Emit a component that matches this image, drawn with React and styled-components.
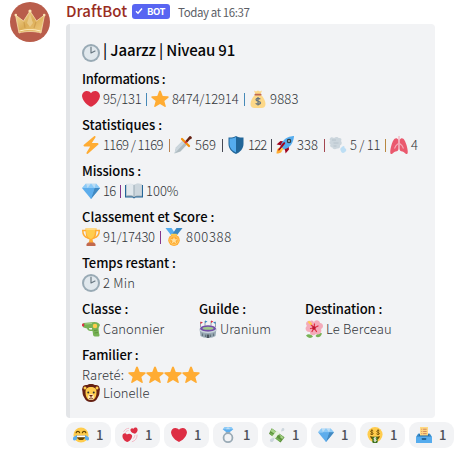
import React from 'react';
import styled, { createGlobalStyle } from 'styled-components';

const GlobalStyle = createGlobalStyle`
  body { margin: 0; background: #fff; overflow: hidden; }
  * { box-sizing: border-box; }
`;

const SANS = '"Noto Sans CJK JP", "Noto Sans", sans-serif';

const Message = styled.article`
  display: flex;
  width: 470px;
  height: 456px;
  padding: 2px 0 0 10px;
  font-family: ${SANS};
`;
const Avatar = styled.div`
  flex: none;
  width: 40px;
  height: 40px;
  margin-right: 16px;
`;
const Content = styled.div`
  flex: 1;
  min-width: 0;
`;
const Header = styled.header`
  display: flex;
  align-items: center;
  height: 18px;
  margin-bottom: 4px;
`;
const Author = styled.span`
  width: 66px;
  color: #992d22;
  font-size: 15px;
  font-weight: 500;
  line-height: 18px;
  letter-spacing: 0.05px;
  white-space: nowrap;
`;
const BotTag = styled.span`
  display: flex;
  align-items: center;
  width: 38px;
  height: 15px;
  padding-left: 3px;
  gap: 4px;
  border-radius: 3px;
  background: #5865f2;
  color: #fff;
  font-size: 9.5px;
  font-weight: 700;
  line-height: 15px;
  letter-spacing: -0.5px;
`;
const Timestamp = styled.time`
  margin-left: 8px;
  padding-top: 2px;
  color: #5c5e66;
  font-size: 11.5px;
  line-height: 18px;
  letter-spacing: -0.4px;
  white-space: nowrap;
`;
const Embed = styled.section`
  width: 369px;
  height: 394px;
  padding: 16px 0 0 12px;
  border-left: 4px solid #e3e5e8;
  border-radius: 4px;
  background: #f2f3f5;
`;
const Title = styled.h1`
  display: flex;
  align-items: flex-end;
  gap: 3px;
  height: 22px;
  margin: 0 0 8px;
  color: #060607;
  font-size: 15px;
  font-weight: 500;
  line-height: 24px;
  letter-spacing: -0.14px;
  white-space: nowrap;
`;
const Field = styled.section`
  width: ${(p) => (p.$width ? `${p.$width}px` : 'auto')};
  margin-bottom: 8px;
`;
const FieldRow = styled.div`
  display: flex;
`;
const FieldName = styled.h2`
  height: 18px;
  margin: 0 0 2px;
  color: #060607;
  font-size: 13px;
  font-weight: 500;
  line-height: 18px;
  letter-spacing: ${(p) => p.$spacing || 0}px;
  white-space: nowrap;
`;
const Line = styled.div`
  display: flex;
  align-items: center;
  height: 18px;
`;
const Value = styled.span`
  flex: none;
  width: ${(p) => (p.$width ? `${p.$width}px` : 'auto')};
  padding-left: ${(p) => (p.$flush ? 0 : 3)}px;
  color: #313338;
  font-size: 13px;
  font-weight: 300;
  line-height: 18px;
  letter-spacing: ${(p) => p.$spacing || 0}px;
  white-space: nowrap;
`;
const Bar = styled.span`
  flex: none;
  width: 1px;
  height: 13px;
  margin: 1px 4px 0 0;
  background: ${(p) => p.$color || '#5b5d68'};
`;
const Reactions = styled.footer`
  display: flex;
  gap: 4px;
  margin-top: 4px;
`;
const Reaction = styled.button`
  display: flex;
  align-items: center;
  width: 45px;
  height: 26px;
  padding: 0 0 0 7px;
  border: 0;
  border-radius: 9px;
  background: #f2f3f5;
  color: #4e5058;
  font: 500 13px/16px ${SANS};
  span { margin-left: 7px; }
`;
const Glyph = styled.svg`
  flex: none;
  display: block;
  width: ${(p) => p.$size}px;
  height: ${(p) => p.$size}px;
`;

const art = {
  clock: (
    <>
      <circle cx="18" cy="18" r="18" fill="#99aab5" />
      <circle cx="18" cy="18" r="14" fill="#e1e8ed" />
      <path d="M18 6v12l8-4" fill="none" stroke="#66757f" strokeWidth="2.3" strokeLinecap="round" strokeLinejoin="round" />
    </>
  ),
  heart: (
    <path fill="#dd2e44" d="M35.9 11.8C35.9 6.4 31.6 2 26.2 2 22.800 2 19.800 3.700 18 6.300 16.200 3.700 13.200 2 9.800 2 4.400 2 .1 6.400.1 11.800c0 .8.1 1.500.3 2.200C1.700 22.200 10.800 30.900 18 33.500c7.200-2.600 16.300-11.300 17.600-19.500.2-.7.3-1.400.3-2.200z" />
  ),
  star: (
    <path fill="#ffac33" d="M18 1c.9 0 1.500.6 1.900 1.500l3.600 9.500 10.300.5c1.700.1 2.200 1.700.9 2.800l-8 6.500 2.800 10c.5 1.700-.9 2.700-2.300 1.800L18 28l-9.200 5.600c-1.400.9-2.800-.1-2.300-1.800l2.800-10-8-6.500c-1.300-1.100-.8-2.700.9-2.800l10.300-.5 3.600-9.500C16.500 1.600 17.100 1 18 1z" />
  ),
  bag: (
    <>
      <path fill="#fdd888" d="M12 10h12c5 4 9 12 9 18 0 5-3 8-8 8H11c-5 0-8-3-8-8 0-6 4-14 9-18z" />
      <path fill="#fdd888" d="M10 1l4 2 4-2 4 2 4-2-3 8H13z" />
      <rect x="11" y="7.500" width="14" height="3.500" rx="1.700" fill="#bf6952" />
      <path fill="none" stroke="#67757f" strokeWidth="2.500" d="M22.500 18.500c-1-2-8.500-2.500-8.500 1.200 0 4 9 2 9 6 0 4-8.500 3.500-9.500.8M18 14v17" />
    </>
  ),
  bolt: <path fill="#ffac33" d="M32.900 15.300c-.3-.8-1-1.300-1.900-1.300H19.600L26.800 2.900c.4-.7.3-1.600-.2-2.200C26-.1 25-.2 24.200.3L3.800 17.400c-.7.600-1 1.500-.7 2.300.3.800 1.100 1.300 1.900 1.300h11.400L9.200 33.100c-.4.700-.3 1.600.2 2.200.7.800 1.700.9 2.400.4l20.400-18.100c.7-.6 1-1.500.7-2.300z" />,
  dagger: (
    <>
      <path fill="#aebbc1" d="M1 35l3-12L19 8l8 8-14 15z" />
      <path fill="#ccd6dd" d="M1 35l3-12L19 8l4 4z" />
      <path stroke="#662113" strokeWidth="5" strokeLinecap="round" d="M25 11l7-8" />
      <path stroke="#f4900c" strokeWidth="4.500" strokeLinecap="round" d="M16 6l14 14" />
      <circle cx="32.500" cy="3.500" r="3" fill="#662113" />
      <circle cx="23.500" cy="12.500" r="2.200" fill="#dd2e44" />
    </>
  ),
  shield: (
    <>
      <path fill="#269" d="M18 0c5 3 10 3.500 15 3v13c0 9-7 17-15 20C10 33 3 25 3 16V3c5 .5 10 0 15-3z" />
      <path fill="#55acee" d="M18 2v31C11 30 5 24 5 16V5c5 0 9-.5 13-3z" />
    </>
  ),
  rocket: (
    <>
      <path fill="#a0041e" d="M1 17l8-7 9 1 7 7 1 9-7 8s0-5-2-9L10 19c-4-2-9-2-9-2z" />
      <path fill="#ffac33" d="M1 35s0-5 2-9c2-3 7-3 8-1 1 3 1 6-1 8-3 2-9 2-9 2z" />
      <path fill="#55acee" d="M36 0S25 0 17 7c-6 5-7 10-8 15l5 5c5-1 10-2 15-8C36 11 36 0 36 0z" />
      <path fill="#a0041e" d="M8 28c-2 1-4 1-4 0l9-13c2-2 4-3 5-2s0 3-2 5z" />
      <circle cx="26" cy="10" r="4.500" fill="#292f33" />
      <circle cx="26" cy="10" r="2.600" fill="#8899a6" />
      <path fill="#ffcc4d" d="M8 28l4-5 3 3-4 5z" />
    </>
  ),
  wind: (
    <>
      <path fill="#ccd6dd" d="M2 5C4 1 8 3 10 4c4-3 8-2 9 0 6-1 7 3 5 6 3 4 1 8-2 9 1 4-2 7-6 6-4 3-9 1-9-2-4 0-6-3-4-6-3-2-3-6 0-7-2-2-2-4-1-5z" />
      <path fill="none" stroke="#aebbc4" strokeWidth="1.300" d="M6 8h8M9 14h10M9 20h6" />
      <path fill="#bddef4" d="M26 22c3-4 6-1 5 2 4 1 5 6 1 8-4 4-8 1-8-2-3-3-1-6 2-8z" />
    </>
  ),
  lungs: (
    <>
      <path fill="#ea596e" d="M14 5c-5-2-8 4-11 13C1 25-1 34 2 36c3 1 5-4 9-5 4 0 6-2 6-6V10c0-3-1-4-3-5zM22 5c5-2 8 4 11 13 2 7 4 16 1 18-3 1-5-4-9-5-4 0-6-2-6-6V10c0-3 1-4 3-5z" />
      <path fill="none" stroke="#f4abba" strokeWidth="2.300" d="M18 0v14l-6 5-3 6M18 14l6 5 3 6" />
    </>
  ),
  gem: (
    <>
      <path fill="#bdddf4" d="M8 3h20l8 9H0z" />
      <path fill="#5dadec" d="M0 12h36L18 34z" />
      <path fill="#8ccaf7" d="M8 3l3 9H0zM28 3l-3 9h11zM11 12l7-9 7 9z" />
      <path fill="#4289c1" d="M25 12h11L18 34z" />
      <path fill="#5dadec" d="M11 12h14l-7 22z" />
    </>
  ),
  book: (
    <>
      <path fill="#226699" d="M0 6h36v25H21l-3 2-3-2H0z" />
      <path fill="#99aab5" d="M2 5h14l2 2 2-2h14v24H21l-3 2-3-2H2z" />
      <path fill="#e1e8ed" d="M3 4c6-2 12-1 15 2 3-3 9-4 15-2v23c-6-1-12-1-15 2-3-3-9-3-15-2z" />
      <path fill="#ccd6dd" d="M18 6c3-3 9-4 15-2v23c-6-1-12-1-15 2z" />
      <path stroke="#99aab5" strokeWidth="2" d="M18 6v23" />
    </>
  ),
  trophy: (
    <>
      <path fill="none" stroke="#ffac33" strokeWidth="3" d="M9 5H1.500c0 8 3 13 11 15M27 5h7.500c0 8-3 13-11 15" />
      <path fill="#ffac33" d="M7 1h22c0 12-1 20-8 22l2 8H13l2-8C8 21 7 13 7 1z" />
      <path fill="#ffcc4d" d="M8 2h18c0 10-1 17-8 20-7-2-10-9-10-20z" />
      <path fill="#c1694f" d="M12 29h12l3 3v4H9v-4z" />
      <ellipse cx="18" cy="2" rx="12" ry="2" fill="#ffd983" />
    </>
  ),
  medal: (
    <>
      <path fill="#55acee" d="M1 0h12l8 12-7 5z" />
      <path fill="#3b88c3" d="M35 0H23L12 16l9 2z" />
      <circle cx="18" cy="24.500" r="11.500" fill="#ffac33" />
      <circle cx="18" cy="24.500" r="8.500" fill="none" stroke="#ffd983" strokeWidth="1.300" />
      <path fill="#ffe0a0" d="M18 18l2 4.500h5L21 26l1.500 5-4.500-3-4.500 3L15 26l-4-3.500h5z" />
      <rect x="12" y="11.500" width="12" height="3.500" rx="1.700" fill="#ffcc4d" />
    </>
  ),
  gun: (
    <>
      <path fill="#77b255" d="M3 6l22-2c6 0 10 3 11 6l-2 4c-2 3 0 8 0 12l1 4c0 2-1 3-3 3h-6c-3 0-4-2-4-5l-1-6h-4c-4 0-6-2-7-5L3 15c-2-2-2-7 0-9z" />
      <rect x="0" y="7" width="4.500" height="6" rx="2" fill="#dd2e44" />
      <path stroke="#a6d388" strokeWidth="2.500" d="M6 8l14-1" />
      <path fill="#f2f3f5" d="M14 16h6v3h-3c-2 0-3-1-3-3z" />
      <circle cx="26" cy="12" r="4.500" fill="#ffcc4d" />
      <path stroke="#5c913b" strokeWidth="1.800" d="M24 21l7-1M25 26l7-1" />
    </>
  ),
  stadium: (
    <>
      <path stroke="#66757f" strokeWidth="1.300" d="M3 14V4M12 11V2M24 11V2M33 14V4" />
      <path fill="#dd2e44" d="M3 3l5 2-5 3zM24 1l5 2-5 3z" />
      <path fill="#3b88c3" d="M12 1l5 2-5 3zM33 3v5l-5-3z" />
      <path fill="#99aab5" d="M1 17c5 5 29 5 34 0l-2 15c-6 5-24 5-30 0z" />
      <ellipse cx="18" cy="17" rx="16" ry="6.500" fill="#744eaa" />
      <ellipse cx="18" cy="16.500" rx="11" ry="3.200" fill="#9fc98a" />
      <path fill="none" stroke="#ccd6dd" strokeWidth="2.500" d="M2 20c6 6 26 6 32 0" />
      <path stroke="#66757f" strokeWidth="2.500" d="M7 27v5M13 29v5M23 29v5M29 27v5" />
      <path fill="#4b565e" d="M15.500 29h5v7h-5z" />
    </>
  ),
  flower: (
    <>
      <path fill="#77b255" d="M2 31c4-4 10-3 14 2-3 4-10 4-14-2zM34 27c-5-2-10 0-13 5 4 5 10 3 13-5z" />
      <path fill="#f4abba" d="M18 5C19-1 29-1 30 6c7 0 8 9 2 12 3 7-4 13-10 10-5 5-13 2-12-4-8 1-12-8-6-12C-1 6 5-1 11 2c3-2 6 0 7 3z" />
      <path fill="none" stroke="#dd2e44" strokeWidth="2.500" strokeLinecap="round" d="M18 16L12 9M18 16l8-4M18 16l5 7M18 16l-4 7M18 16l-7 1M18 16l1-8" />
      <circle cx="18" cy="16" r="3.500" fill="#be1931" />
      <path stroke="#ffcc4d" strokeWidth="4" strokeLinecap="round" d="M8 4l4 4" />
    </>
  ),
  lion: (
    <>
      <path fill="#662113" d="M18 0c4 0 6 1 8 2 4-1 9 1 9 6 2 3 0 5 0 8 0 6-2 9-4 12-2 5-7 8-13 8S7 33 5 28c-2-3-4-6-4-12 0-3-2-5 0-8 0-5 5-7 9-6 2-1 4-2 8-2z" />
      <circle cx="6" cy="8" r="3" fill="#ffcc4d" />
      <circle cx="30" cy="8" r="3" fill="#ffcc4d" />
      <path fill="#ffcc4d" d="M18 6c7 0 11 3 11 10 0 9-3 16-11 16S7 25 7 16C7 9 11 6 18 6z" />
      <ellipse cx="18" cy="26" rx="6" ry="6" fill="#ffe8b6" />
      <circle cx="12.500" cy="17" r="2" fill="#292f33" />
      <circle cx="23.500" cy="17" r="2" fill="#292f33" />
      <path fill="#662113" d="M14 22h8l-4 4z" />
      <path fill="none" stroke="#662113" strokeWidth="1.500" d="M18 25v3M14 29c2 1 6 1 8 0" />
    </>
  ),
  joy: (
    <>
      <circle cx="18" cy="18" r="17" fill="#ffcc4d" />
      <path fill="none" stroke="#664500" strokeWidth="2.600" strokeLinecap="round" d="M7 13c1-4 7-4 8 0M21 13c1-4 7-4 8 0" />
      <path fill="#664500" d="M8 19h20c0 14-20 14-20 0z" />
      <path fill="#fff" d="M9 19h18v4H9z" />
      <path fill="#5dadec" d="M8 18c2 5 2 11-3 12s-7-4-4-7zM28 18c-2 5-2 11 3 12s7-4 4-7z" />
    </>
  ),
  hearts: (
    <>
      <path fill="#dd2e44" d="M12 34C7 32 1 27 1 20c0-6 7-8 10-3 4-4 12-2 12 4-1 7-6 11-11 13zM29 15c-4 0-9-3-10-7-1-5 4-7 7-4 2-4 8-4 9 1 1 4-2 8-6 10z" />
      <path fill="none" stroke="#f4abba" strokeWidth="1.800" strokeLinecap="round" d="M4 10c3-5 7-7 11-7M34 18c0 8-4 13-11 15M29 19c-1 4-2 6-4 7M8 12c2-3 4-4 6-4" />
    </>
  ),
  ring: (
    <>
      <circle cx="18" cy="24" r="10" fill="none" stroke="#99aab5" strokeWidth="4" />
      <path fill="#8ccaf7" d="M10 0h16l4 5-12 9L6 5z" />
      <path fill="#5dadec" d="M6 5h24l-12 9z" />
      <path fill="#bdddf4" d="M13 5l5-5 5 5z" />
      <path stroke="#99aab5" strokeWidth="3" d="M13 13h10" />
    </>
  ),
  money: (
    <>
      <path fill="#5c913b" d="M6 3l29 20-9 12L0 15z" />
      <path fill="#a6d388" d="M7 4l26 19-3 4L3 9z" />
      <path fill="#77b255" d="M4 13l23 17-3 3L2 15z" />
      <path fill="#e8f0e0" d="M18 8l7 5-13 15-7-5z" />
      <circle cx="22" cy="22" r="4" fill="#5c913b" />
      <path fill="#ccd6dd" d="M31 2c4 0 5 5 1 7l-5 1c1-3 1-7 4-8zM5 26l7-2c0 6-3 10-7 10-4-1-4-6 0-8z" />
    </>
  ),
  rich: (
    <>
      <circle cx="18" cy="17" r="17" fill="#ffcc4d" />
      <path fill="none" stroke="#664500" strokeWidth="1.700" d="M14 9c-2-2-7-1-6 1 1 3 6 2 6 5 0 2-5 3-7 0M11 5v13M28 9c-2-2-7-1-6 1 1 3 6 2 6 5 0 2-5 3-7 0M25 5v13" />
      <path fill="#664500" d="M7 20c7 3 15 3 22 0-1 6-5 9-11 9S8 26 7 20z" />
      <path fill="#3e721d" d="M12 22h12v11c0 2-1 3-3 3h-6c-2 0-3-1-3-3z" />
      <path fill="none" stroke="#fff" strokeWidth="2" d="M21 25c-2-2-6 0-5 2 2 2 5 1 5 3s-4 2-6 0M18 23v11" />
    </>
  ),
  ballot: (
    <>
      <path fill="#55acee" d="M5 15h26l5 7v14H0V22z" />
      <path fill="#3b88c3" d="M5 15h26l4 7H1z" />
      <path fill="#226699" d="M7 17h22v3H7z" />
      <path fill="#ffd983" d="M9 0h18v19H9z" />
      <path stroke="#c1694f" strokeWidth="1.700" d="M12 5h2M16 5h8M12 10h2M16 10h8M12 15h2M16 15h8" />
      <rect x="13" y="25" width="10" height="4" rx="1" fill="#269" />
    </>
  ),
};

function Emoji({ name, size = 18 }) {
  return (
    <Glyph $size={size} viewBox="0 0 36 36" aria-label={name}>
      {art[name]}
    </Glyph>
  );
}

function Crown() {
  return (
    <svg width="40" height="40" viewBox="0 0 40 40">
      <defs>
        <linearGradient id="gold" x1="0" y1="0" x2="1" y2="1">
          <stop offset="0" stopColor="#f6dda0" />
          <stop offset=".5" stopColor="#dcae58" />
          <stop offset="1" stopColor="#f0cb80" />
        </linearGradient>
      </defs>
      <circle cx="20" cy="20" r="20" fill="#b95d4b" />
      <path
        d="M9 31L5.500 13l8 6L20 9l6.500 10 8-6L31 31c-6-2-16-2-22 0z"
        fill="url(#gold)"
        stroke="#f5dcab"
        strokeWidth=".8"
        strokeLinejoin="round"
      />
      <path d="M14 20l1 6M26 20l-2 6" stroke="#c08c3f" strokeWidth="1.200" opacity=".5" />
      <path d="M20 12l3 9-3 4-3-4z" fill="#e9c987" />
      <path d="M9.500 29c6-2 15-2 21 0" fill="none" stroke="#fff0c5" strokeWidth="1.200" />
      <circle cx="20" cy="9" r="1.600" fill="#fae4b4" />
      <circle cx="5.800" cy="13" r="1.300" fill="#fae4b4" />
      <circle cx="34.200" cy="13" r="1.300" fill="#fae4b4" />
    </svg>
  );
}

function Stats({ items }) {
  return (
    <Line>
      {items.map(([icon, text, width, bar, spacing]) => (
        <React.Fragment key={icon}>
          <Emoji name={icon} />
          <Value $width={width} $spacing={spacing}>{text}</Value>
          {bar && <Bar $color={bar} />}
        </React.Fragment>
      ))}
    </Line>
  );
}

const reactions = ['joy', 'hearts', 'heart', 'ring', 'money', 'gem', 'rich', 'ballot'];

export default function App() {
  return (
    <>
      <GlobalStyle />
      <Message>
        <Avatar><Crown /></Avatar>
        <Content>
          <Header>
            <Author>DraftBot</Author>
            <BotTag>
              <svg width="8" height="8" viewBox="0 0 8 8"><path d="M1 4.300l2 2L7 1.500" fill="none" stroke="#fff" strokeWidth="1.400" /></svg>
              BOT
            </BotTag>
            <Timestamp>Today at 16:37</Timestamp>
          </Header>
          <Embed>
            <Title><Emoji name="clock" /><span>| Jaarzz | Niveau 91</span></Title>
            <Field>
              <FieldName $spacing={-0.28}>Informations :</FieldName>
              <Stats items={[['heart', '95/131', 46, '#4689b8', -0.25], ['star', '8474/12914', 75, '#4689b8', -0.12], ['bag', '9883', 0, null, 0.2]]} />
            </Field>
            <Field>
              <FieldName>Statistiques :</FieldName>
              <Stats
                items={[
                  ['bolt', '1169 / 1169', 69, '#b88352', -0.6],
                  ['dagger', '569', 30, '#464954'],
                  ['shield', '122', 26, '#464954', -0.8],
                  ['rocket', '338', 30, '#a34650'],
                  ['wind', '5 / 11', 38, '#b88740', -0.25],
                  ['lungs', '4'],
                ]}
              />
            </Field>
            <Field>
              <FieldName $spacing={-0.1}>Missions :</FieldName>
              <Stats items={[['gem', '16', 20, '#84368c', -0.8], ['book', '100%']]} />
            </Field>
            <Field>
              <FieldName>Classement et Score :</FieldName>
              <Stats items={[['trophy', '91/17430', 60, '#84368c', -0.25], ['medal', '800388', 0, null, 0.7]]} />
            </Field>
            <Field>
              <FieldName $spacing={-0.06}>Temps restant :</FieldName>
              <Stats items={[['clock', '2 Min', 0, null, 0.2]]} />
            </Field>
            <FieldRow>
              <Field $width={117}>
                <FieldName>Classe :</FieldName>
                <Stats items={[['gun', 'Canonnier']]} />
              </Field>
              <Field $width={106}>
                <FieldName>Guilde :</FieldName>
                <Stats items={[['stadium', 'Uranium']]} />
              </Field>
              <Field>
                <FieldName $spacing={-0.1}>Destination :</FieldName>
                <Stats items={[['flower', 'Le Berceau', 0, null, 0.18]]} />
              </Field>
            </FieldRow>
            <Field>
              <FieldName $spacing={-0.08}>Familier :</FieldName>
              <Line>
                <Value $flush $width={46} $spacing={0.15}>Rareté:</Value>
                {[1, 2, 3, 4].map((n) => <Emoji key={n} name="star" />)}
              </Line>
              <Stats items={[['lion', 'Lionelle']]} />
            </Field>
          </Embed>
          <Reactions>
            {reactions.map((name) => (
              <Reaction key={name}><Emoji name={name} size={16} /><span>1</span></Reaction>
            ))}
          </Reactions>
        </Content>
      </Message>
    </>
  );
}
